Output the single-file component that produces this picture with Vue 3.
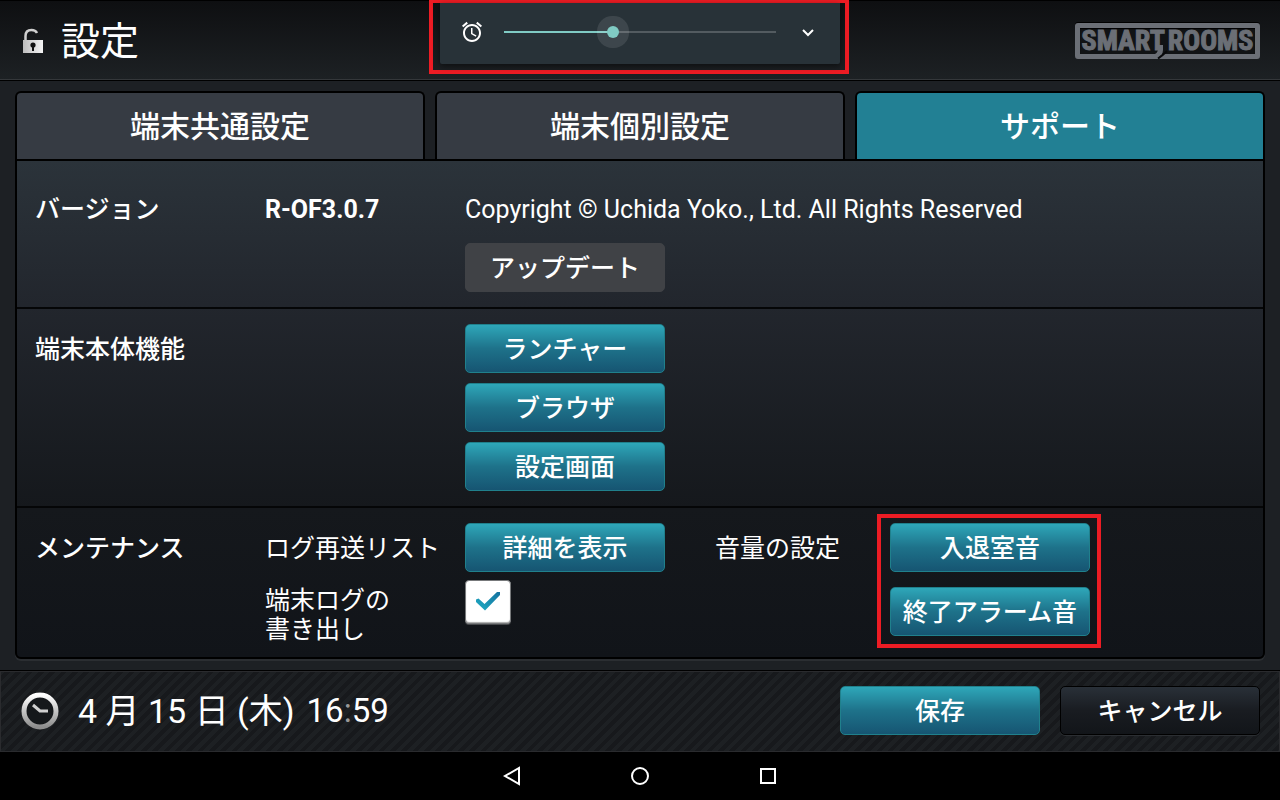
<template>
  <div class="app">
    <header class="header">
      <svg class="lock" width="24" height="28" viewBox="0 0 24 28" aria-hidden="true">
        <defs>
          <linearGradient id="lockFill" x1="0" y1="0" x2="1" y2="0">
            <stop offset="0" stop-color="#bdbdbd" />
            <stop offset="1" stop-color="#f4f4f4" />
          </linearGradient>
        </defs>
        <path d="M5.500 13V9C5.500 5 8 3 11.500 3C14 3 16 4 17 6" fill="none" stroke="#cfcfcf" stroke-width="2.500" />
        <rect x="3" y="13" width="20" height="13" fill="url(#lockFill)" />
        <circle cx="13" cy="18" r="2.600" fill="#111" />
        <rect x="12" y="18" width="2" height="6" fill="#111" />
      </svg>
      <h1>設定</h1>
      <div class="logo">
        <span>SMART</span><span>ROOMS</span>
        <svg class="tail" width="16" height="14" viewBox="0 0 16 14" aria-hidden="true">
          <path d="M6 0H11V5Q11 11 4 13H0V10Q6 9 6 4Z" fill="#6b6f76" />
          <path d="M15 6Q11 10 6 13.500" fill="none" stroke="#08090a" stroke-width="2" />
        </svg>
      </div>
    </header>

    <div class="volume">
      <svg width="24" height="24" viewBox="0 0 24 24" fill="#fff" aria-hidden="true">
        <path d="M22 5.720l-4.600-3.860-1.290 1.530 4.600 3.860L22 5.720zM7.880 3.390L6.600 1.860 2 5.710l1.290 1.530 4.590-3.850zM12.500 8H11v6l4.750 2.850.75-1.230-4-2.370V8zM12 4c-4.970 0-9 4.030-9 9s4.020 9 9 9c4.970 0 9-4.030 9-9s-4.030-9-9-9zm0 16c-3.870 0-7-3.130-7-7s3.130-7 7-7 7 3.130 7 7-3.130 7-7 7z" />
      </svg>
      <input type="range" min="0" max="1000" v-model="volume" aria-label="音量" :style="{ '--level': volume / 10 + '%' }">
      <button class="expand" aria-label="展開">
        <svg width="16" height="16" viewBox="0 0 16 16" aria-hidden="true">
          <path d="M3 6L8 11L13 6" fill="none" stroke="#fff" stroke-width="2" />
        </svg>
      </button>
    </div>

    <main class="main">
      <nav class="tabs">
        <button v-for="tab in tabs" :key="tab" class="tab" :class="{ active: tab === activeTab }" @click="activeTab = tab">{{ tab }}</button>
      </nav>

      <div class="panel">
        <section class="row version">
          <h2>バージョン</h2>
          <strong class="name">R-OF3.0.7</strong>
          <div class="stack">
            <p class="copyright">Copyright © Uchida Yoko., Ltd. All Rights Reserved</p>
            <button class="btn disabled">アップデート</button>
          </div>
        </section>

        <section class="row">
          <h2>端末本体機能</h2>
          <span class="name"></span>
          <div class="stack functions">
            <button v-for="item in functions" :key="item" class="btn">{{ item }}</button>
          </div>
        </section>

        <section class="row">
          <h2>メンテナンス</h2>
          <div class="logs">
            <div class="field">
              <span class="name">ログ再送リスト</span>
              <button class="btn">詳細を表示</button>
            </div>
            <div class="field export">
              <label class="name" for="exportLog">端末ログの<br>書き出し</label>
              <span class="check">
                <input id="exportLog" type="checkbox" v-model="exportLog">
                <svg v-if="exportLog" width="26" height="20" viewBox="0 0 26 20" aria-hidden="true">
                  <defs>
                    <linearGradient id="checkFill" x1="0" y1="1" x2="1" y2="0">
                      <stop offset="0" stop-color="#1fadc4" />
                      <stop offset="1" stop-color="#14719f" />
                    </linearGradient>
                  </defs>
                  <path d="M1 8.500L3.500 7.500L9.500 13L22 1L25 1V4L10 19.500L1 11Z" fill="url(#checkFill)" />
                </svg>
              </span>
            </div>
          </div>
          <span class="sound-label">音量の設定</span>
          <div class="stack sounds">
            <button v-for="item in sounds" :key="item" class="btn">{{ item }}</button>
          </div>
        </section>
      </div>
    </main>

    <footer class="footer">
      <svg width="40" height="40" viewBox="0 0 40 40" aria-hidden="true">
        <defs>
          <linearGradient id="clockRing" x1="0" y1="0" x2="0" y2="1">
            <stop offset="0" stop-color="#fff" />
            <stop offset="1" stop-color="#8d8d8d" />
          </linearGradient>
        </defs>
        <circle cx="20" cy="19" r="18" fill="#08090a" />
        <circle cx="20" cy="20" r="16" fill="#15181b" stroke="url(#clockRing)" stroke-width="5" />
        <path d="M13 14L20 20H28" fill="none" stroke="#d0d0d0" stroke-width="3" />
      </svg>
      <time class="date">4 月 15 日 (木)</time>
      <time class="clock">16<span>:</span>59</time>
      <div class="actions">
        <button class="btn">保存</button>
        <button class="btn dark">キャンセル</button>
      </div>
    </footer>

    <nav class="navbar">
      <button aria-label="戻る">
        <svg width="24" height="24" viewBox="0 0 24 24"><path d="M19 4V20L5 12Z" /></svg>
      </button>
      <button aria-label="ホーム">
        <svg width="24" height="24" viewBox="0 0 24 24"><circle cx="12" cy="12" r="8" /></svg>
      </button>
      <button aria-label="履歴">
        <svg width="24" height="24" viewBox="0 0 24 24"><rect x="5" y="5" width="14" height="14" /></svg>
      </button>
    </nav>
  </div>
</template>

<script setup>
import { ref } from 'vue'

const tabs = ['端末共通設定', '端末個別設定', 'サポート']
const activeTab = ref('サポート')

const functions = ['ランチャー', 'ブラウザ', '設定画面']
const sounds = ['入退室音', '終了アラーム音']

const volume = ref(396)
const exportLog = ref(true)
</script>

<style>
body {
  margin: 0;
  background: #000;
}
</style>

<style scoped>
.app {
  position: relative;
  display: flex;
  flex-direction: column;
  min-height: 100vh;
  background: #1d2024;
  color: #fff;
  font-family: Roboto, "Noto Sans CJK JP", sans-serif;
  font-size: 25px;
}

* {
  box-sizing: border-box;
}

button {
  padding: 0;
  border: 0;
  background: none;
  color: inherit;
  font: inherit;
  cursor: pointer;
}

svg {
  display: block;
  flex: none;
}

h1,
h2,
p {
  margin: 0;
}

.header {
  display: flex;
  align-items: center;
  height: 81px;
  padding: 0 20px;
  border-top: 1px solid #000;
  border-bottom: 1px solid #000;
  background: linear-gradient(#0e0f11, #1d2124);
  box-shadow: inset 0 -1px #34373a;
}

h1 {
  padding-top: 2px;
  margin-left: 17px;
  font-size: 39px;
  font-weight: 400;
  line-height: 58px;
}

.logo {
  position: relative;
  display: flex;
  justify-content: center;
  gap: 3px;
  width: 185px;
  height: 36px;
  margin-left: auto;
  border: 5px solid #6b6f76;
  border-radius: 3px;
  background: #111315;
  box-shadow: 0 -1px #000, inset 0 1px 1px #000;
  color: #6b6f76;
  font-family: "Liberation Sans Narrow", "Roboto Condensed", Roboto, sans-serif;
  font-size: 28px;
  font-weight: 700;
  line-height: 26px;
  -webkit-text-stroke: 1px #6b6f76;
}

.tail {
  position: absolute;
  left: 72px;
  bottom: -5px;
}

.volume {
  position: absolute;
  top: 0;
  left: 50%;
  display: flex;
  align-items: center;
  width: 420px;
  height: 74px;
  padding: 0 29px 10px 27px;
  margin-left: -211px;
  border: 4px solid #ed1c24;
  border-top-width: 3px;
}

.volume::before {
  content: "";
  position: absolute;
  inset: 0 5px 6px 7px;
  z-index: 0;
  border-radius: 0 0 2px 2px;
  background: #283238;
  box-shadow: 0 2px 6px rgba(0, 0, 0, 0.5);
}

.volume > * {
  position: relative;
}

.volume input {
  flex: 1;
  min-width: 0;
  height: 32px;
  margin: 0 24px 0 20px;
  appearance: none;
  background: linear-gradient(#80cbc4, #80cbc4) left / var(--level) 2px no-repeat,
    linear-gradient(#535b60, #535b60) center / 100% 2px no-repeat;
}

.volume input::-webkit-slider-thumb {
  width: 12px;
  height: 12px;
  appearance: none;
  border-radius: 50%;
  background: #80cbc4;
  box-shadow: 0 0 0 10px rgba(255, 255, 255, 0.1);
}

.main {
  flex: 1;
  padding: 10px 15px 11px;
}

.tabs {
  display: flex;
  gap: 10px;
}

.tab {
  flex: 1;
  height: 68px;
  padding-bottom: 4px;
  border: 2px solid #000;
  border-bottom: 0;
  border-radius: 6px 6px 0 0;
  background: #363b43;
  font-size: 30px;
  font-weight: 500;
}

.tab.active {
  background: #228094;
}

.panel {
  border: 2px solid #000;
  border-radius: 0 0 6px 6px;
  background: linear-gradient(#2b333a, #22262d 29%, #15181c 70%, #111419);
  box-shadow: 0 2px #2b2e32;
}

.row {
  display: flex;
  padding: 15px 18px;
  border-bottom: 2px solid #050607;
}

.row:last-child {
  padding-bottom: 13px;
  border-bottom: 0;
}

h2 {
  width: 230px;
  font-size: 25px;
  font-weight: 500;
  line-height: 51px;
}

.name {
  width: 200px;
  line-height: 51px;
}

.version h2,
.version .name,
.copyright {
  line-height: 67px;
}

.stack {
  display: flex;
  flex-direction: column;
  align-items: flex-start;
}

.functions {
  gap: 10px;
}

.btn {
  width: 200px;
  height: 49px;
  padding-bottom: 4px;
  border: 1px solid #20808c;
  border-radius: 5px;
  background: linear-gradient(#2ea7b9, #1e728a 50%, #165572);
  font-weight: 500;
}

.btn.disabled {
  border-color: #404246;
  background: #404246;
}

.btn.dark {
  border-color: #000;
  background: linear-gradient(#293038, #191c21 50%, #121519);
  box-shadow: 0 1px #2b2e32;
}

.logs {
  width: 450px;
}

.field {
  display: flex;
}

.export {
  padding-top: 6px;
}

.export .name {
  padding-top: 6px;
  line-height: 29px;
}

.check {
  position: relative;
  height: 44px;
}

.check input {
  display: block;
  width: 46px;
  height: 44px;
  margin: 0;
  appearance: none;
  border: 1px solid #77797b;
  border-radius: 4px;
  background: #fff;
  box-shadow: inset 0 -1px 1px #aaa, 0 1px #484a4d;
}

.check svg {
  position: absolute;
  top: 11px;
  left: 10px;
  pointer-events: none;
}

.sound-label {
  width: 175px;
  line-height: 51px;
}

.sounds {
  position: relative;
  align-self: flex-start;
  gap: 15px;
}

.sounds::after {
  content: "";
  position: absolute;
  inset: -9px -11px -12px -13px;
  border: 4px solid #ed1c24;
  pointer-events: none;
}

.footer {
  display: flex;
  align-items: center;
  height: 82px;
  padding: 0 20px 2px;
  border-top: 1px solid #000;
  background: repeating-linear-gradient(135deg, #1d2023 0 4px, #17191c 4px 8px);
  box-shadow: inset 0 0 0 1px #2a2b2e;
  font-size: 33px;
  line-height: 40px;
}

.date {
  margin-left: 18px;
  font-size: 34px;
}

.clock {
  margin-left: 12px;
}

.clock span {
  color: #999;
}

.actions {
  display: flex;
  gap: 20px;
  margin-left: auto;
  font-size: 25px;
  line-height: normal;
}

.navbar {
  display: flex;
  align-items: center;
  justify-content: center;
  gap: 104px;
  height: 48px;
  background: #000;
}

.navbar svg {
  fill: none;
  stroke: #fff;
  stroke-width: 2;
}
</style>
